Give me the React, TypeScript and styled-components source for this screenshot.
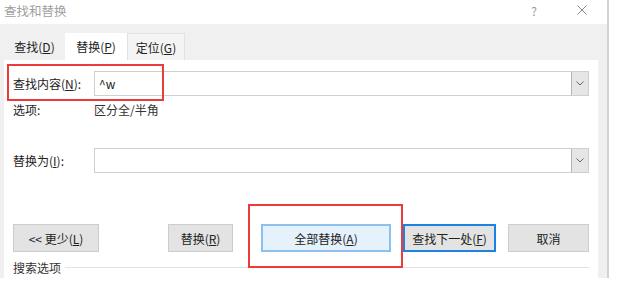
import React from "react";
import styled, { createGlobalStyle } from "styled-components";

const Global = createGlobalStyle`
  html, body { margin: 0; padding: 0; background: #ffffff; }
  body { font-family: "Noto Sans CJK SC", "Microsoft YaHei", sans-serif; font-size: 12px; color: #262626; }
`;

const Dialog = styled.div`
  width: 607px;
  height: 278px;
  background: #f0f0f0;
  border-right: 2px solid #d2d2d2;
  display: flex;
  flex-direction: column;
  overflow: hidden;
`;

const TitleBar = styled.div`
  height: 24px;
  background: #ffffff;
  display: flex;
  align-items: center;
  padding: 0 0 0 4px;
  flex-shrink: 0;
`;

const Title = styled.div`
  flex: 1;
  color: #a0a0a0;
  font-size: 12.5px;
  margin-top: -4px;
`;

const Help = styled.div`
  color: #9a9a9a;
  font-size: 12px;
  margin-right: 40px;
  margin-top: -4px;
`;

const Close = styled.div`
  width: 10px;
  height: 10px;
  margin-right: 20px;
  margin-top: -5px;
  display: flex;
`;

const Body = styled.div`
  flex: 1;
  display: flex;
  flex-direction: column;
  padding: 9px 9px 0 4px;
  min-height: 0;
`;

const TabBar = styled.div`
  display: flex;
  height: 27px;
  flex-shrink: 0;
`;

const Tab = styled.div<{ $w: number; $state: "plain" | "active" | "idle" }>`
  width: ${(p) => p.$w}px;
  box-sizing: border-box;
  display: flex;
  align-items: center;
  justify-content: center;
  font-size: 12px;
  color: #222;
  background: ${(p) => (p.$state === "active" ? "#ffffff" : p.$state === "idle" ? "#f4f4f4" : "transparent")};
  border: ${(p) => (p.$state === "idle" ? "1px solid #e2e2e2" : "none")};
  border-bottom: none;
`;

const Panel = styled.div`
  flex: 1;
  background: #ffffff;
  display: flex;
  flex-direction: column;
  padding: 11px 9px 0 9px;
  min-height: 0;
`;

const FieldRow = styled.div`
  position: relative;
  display: flex;
  align-items: center;
  height: 25px;
`;

const Label = styled.div`
  width: 81px;
  flex-shrink: 0;
  font-size: 12px;
  color: #222;
`;

const Combo = styled.div`
  flex: 1;
  height: 25px;
  box-sizing: border-box;
  border: 1px solid #cfcfcf;
  display: flex;
  align-items: stretch;
  background: #fff;
`;

const ComboText = styled.div`
  flex: 1;
  padding-left: 4px;
  display: flex;
  align-items: center;
  font-size: 12px;
  color: #222;
`;

const DropBtn = styled.div`
  width: 17px;
  box-sizing: border-box;
  background: #e6e6e6;
  border-left: 1px solid #b4b4b4;
  display: flex;
  align-items: center;
  justify-content: center;
`;

const RedBox = styled.div<{ $l: number; $t: number; $w: number; $h: number }>`
  position: absolute;
  left: ${(p) => p.$l}px;
  top: ${(p) => p.$t}px;
  width: ${(p) => p.$w}px;
  height: ${(p) => p.$h}px;
  box-sizing: border-box;
  border: 2px solid #ec3b3b;
  pointer-events: none;
`;

const OptionsRow = styled.div`
  display: flex;
  margin-top: 5px;
  height: 16px;
  align-items: center;
  font-size: 12px;
  color: #333;
`;

const Spacer = styled.div<{ $h: number }>`
  height: ${(p) => p.$h}px;
  flex-shrink: 0;
`;

const ButtonRow = styled.div`
  display: flex;
  align-items: center;
  height: 28px;
`;

const Button = styled.div<{ $w: number; $variant?: "default" | "focus" | "hover" }>`
  position: relative;
  width: ${(p) => p.$w}px;
  height: 28px;
  box-sizing: border-box;
  display: flex;
  align-items: center;
  justify-content: center;
  font-size: 12px;
  color: #222;
  background: ${(p) => (p.$variant === "hover" ? "#e5f1fb" : "#e3e3e3")};
  border: ${(p) =>
    p.$variant === "hover"
      ? "2px solid #8cc0ef"
      : p.$variant === "focus"
      ? "2px solid #1a84e0"
      : "1px solid #cdcdcd"};
`;

const Grow = styled.div`
  flex: 1;
`;

const Gap = styled.div<{ $w: number }>`
  width: ${(p) => p.$w}px;
  flex-shrink: 0;
`;

const GroupRow = styled.div`
  display: flex;
  align-items: center;
  margin-top: 7px;
  height: 16px;
  font-size: 12px;
  color: #333;
`;

const GroupLine = styled.div`
  flex: 1;
  height: 1px;
  background: #e3e3e3;
  margin-left: 4px;
  margin-right: 0;
`;

const U = styled.span`
  text-decoration: underline;
  text-underline-offset: 1px;
`;

const Chevron = () => (
  <svg width="8" height="5" viewBox="0 0 8 5">
    <path d="M0.5 0.5 L4 4 L7.5 0.5" fill="none" stroke="#666" strokeWidth="1" />
  </svg>
);

export default function App() {
  return (
    <>
      <Global />
      <Dialog>
        <TitleBar>
          <Title>查找和替换</Title>
          <Help>?</Help>
          <Close>
            <svg width="10" height="10" viewBox="0 0 10 10">
              <path d="M0.5 0.5 L9.5 9.5 M9.5 0.5 L0.5 9.5" stroke="#8a8a8a" strokeWidth="1" />
            </svg>
          </Close>
        </TitleBar>
        <Body>
          <TabBar>
            <Tab $w={61} $state="plain">
              查找(<U>D</U>)
            </Tab>
            <Tab $w={62} $state="active">
              替换(<U>P</U>)
            </Tab>
            <Tab $w={58} $state="idle">
              定位(<U>G</U>)
            </Tab>
          </TabBar>
          <Panel>
            <FieldRow>
              <Label>
                查找内容(<U>N</U>):
              </Label>
              <Combo>
                <ComboText>^w</ComboText>
                <DropBtn>
                  <Chevron />
                </DropBtn>
              </Combo>
              <RedBox $l={-6} $t={-7} $w={157} $h={37} />
            </FieldRow>
            <OptionsRow>
              <Label>选项:</Label>
              <div>区分全/半角</div>
            </OptionsRow>
            <Spacer $h={31} />
            <FieldRow>
              <Label>
                替换为(<U>I</U>):
              </Label>
              <Combo>
                <ComboText />
                <DropBtn>
                  <Chevron />
                </DropBtn>
              </Combo>
            </FieldRow>
            <Spacer $h={51} />
            <ButtonRow>
              <Button $w={86}>
                &lt;&lt; 更少(<U>L</U>)
              </Button>
              <Grow />
              <Button $w={65}>
                替换(<U>R</U>)
              </Button>
              <Gap $w={28} />
              <Button $w={130} $variant="hover">
                全部替换(<U>A</U>)
                <RedBox $l={-15} $t={-22} $w={155} $h={64} />
              </Button>
              <Gap $w={12} />
              <Button $w={93} $variant="focus">
                查找下一处(<U>F</U>)
              </Button>
              <Gap $w={12} />
              <Button $w={81}>取消</Button>
            </ButtonRow>
            <GroupRow>
              <span>搜索选项</span>
              <GroupLine />
            </GroupRow>
          </Panel>
        </Body>
      </Dialog>
    </>
  );
}
